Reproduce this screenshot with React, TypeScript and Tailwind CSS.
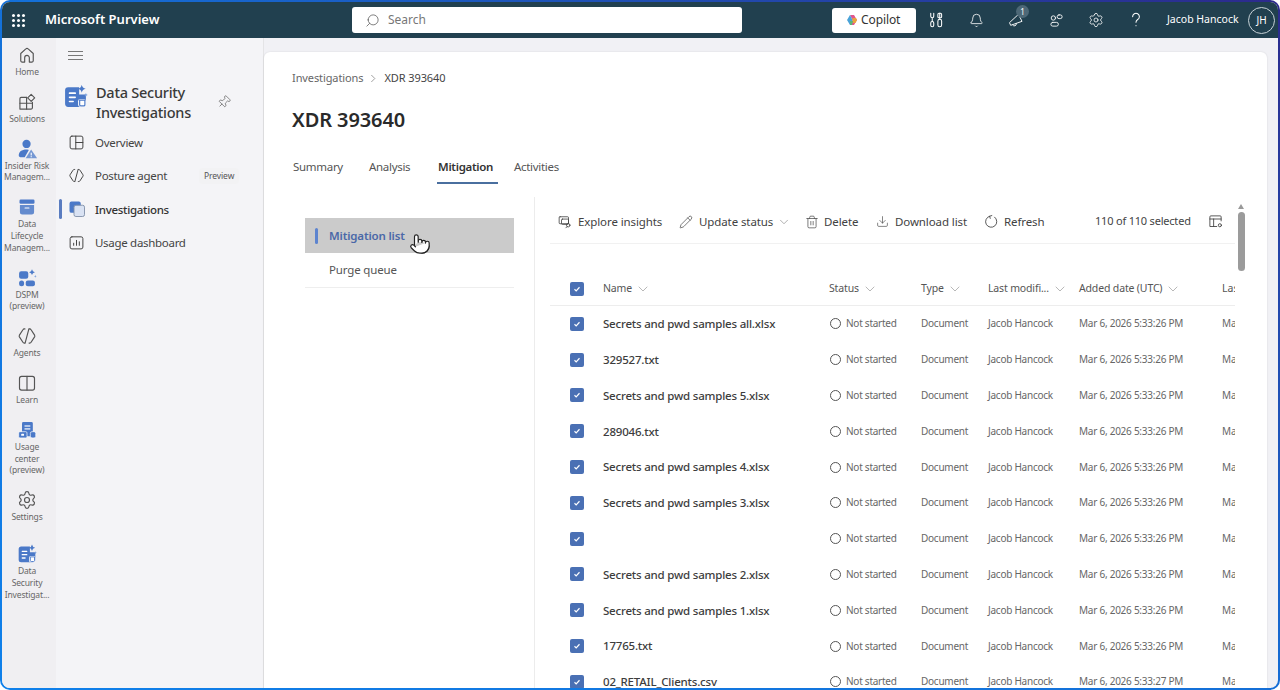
import { Bell, ChevronDown, Download, Pencil, Pin, Pointer, Search, Settings, Trash2 } from "lucide-react";
import type { ReactNode } from "react";

const FONT = "font-['Noto_Sans','Open_Sans',sans-serif]";
const BLUE = "#4b79c8";

function Ic({ children, className = "w-5 h-5" }: { children: ReactNode; className?: string }) {
  return (
    <svg viewBox="0 0 24 24" fill="none" stroke="currentColor" strokeWidth="1.4" strokeLinecap="round" strokeLinejoin="round" className={className}>
      {children}
    </svg>
  );
}

function Sparkle({ x, y, s, fill }: { x: number; y: number; s: number; fill: string }) {
  return <path d={`M${x} ${y - s}Q${x + s * 0.15} ${y - s * 0.15} ${x + s} ${y}Q${x + s * 0.15} ${y + s * 0.15} ${x} ${y + s}Q${x - s * 0.15} ${y + s * 0.15} ${x - s} ${y}Q${x - s * 0.15} ${y - s * 0.15} ${x} ${y - s}Z`} fill={fill} stroke="none" />;
}

function HomeIcon() {
  return <Ic><path d="M4.5 10.2 10.6 4.6a2 2 0 0 1 2.8 0l6.1 5.6V19a1.5 1.5 0 0 1-1.5 1.5h-3.2v-5.2a2.8 2.8 0 0 0-5.600 0v5.200H6A1.5 1.5 0 0 1 4.500 19z" /></Ic>;
}

function SolutionsIcon() {
  return (
    <Ic>
      <path d="M11.500 6.500H5A1.500 1.500 0 0 0 3.500 8v12.500H17a1.500 1.500 0 0 0 1.500-1.500v-6.500" />
      <path d="M3.500 13.500h15M11.500 6.500v14" />
      <path d="m17 2.800 4.200 4.200-4.200 4.200L12.800 7z" />
    </Ic>
  );
}

function InsiderIcon() {
  return (
    <svg viewBox="0 0 24 24" className="w-[22px] h-[22px]">
      <circle cx="11.500" cy="6.500" r="4.500" fill={BLUE} />
      <path d="M3 19c0-4 3-6.500 8.500-6.500 1.500 0 2 .3 2.500.6L9.500 21H6c-2 0-3-.8-3-2z" fill={BLUE} />
      <path d="M16.500 12.500 23 22H10.500z" fill={BLUE} opacity="0.75" />
      <rect x="16" y="16" width="1.200" height="3" fill="#fff" />
      <rect x="16" y="19.800" width="1.200" height="1.200" fill="#fff" />
    </svg>
  );
}

function ArchiveIcon() {
  return (
    <svg viewBox="0 0 24 24" className="w-5 h-5">
      <rect x="3" y="3" width="18" height="5" rx="1.500" fill={BLUE} />
      <path d="M3.500 9.500h17V18a3 3 0 0 1-3 3h-11a3 3 0 0 1-3-3z" fill={BLUE} opacity="0.85" />
      <rect x="9" y="12.500" width="6" height="1.400" rx="0.7" fill="#fff" />
    </svg>
  );
}

function DspmIcon() {
  return (
    <svg viewBox="0 0 24 24" className="w-5 h-5">
      <rect x="2.500" y="4" width="11" height="9" rx="2.500" fill={BLUE} />
      <rect x="2.500" y="15" width="6" height="7" rx="3" fill={BLUE} />
      <rect x="10.500" y="15" width="11" height="7" rx="2.500" fill={BLUE} />
      <Sparkle x={18} y={5} s={3.500} fill={BLUE} />
      <Sparkle x={22} y={10} s={1.600} fill="#7fa3dd" />
    </svg>
  );
}

function AgentIcon({ className = "w-5 h-5" }: { className?: string }) {
  return (
    <Ic className={className}>
      <path d="M9.500 3.500H8.800a2 2 0 0 0-1.700 1L2.900 11a2 2 0 0 0 0 2l4.200 6.500a2 2 0 0 0 1.700 1h.7" />
      <path d="M14.500 3.500h.7a2 2 0 0 1 1.700 1l4.200 6.500a2 2 0 0 1 0 2l-4.200 6.500a2 2 0 0 1-1.700 1h-.7" />
      <path d="m14.200 3.800-4.400 16.400" />
    </Ic>
  );
}

function BookIcon() {
  return <Ic><rect x="3" y="4" width="18" height="16.500" rx="2.500" /><path d="M12 4v16.500" /></Ic>;
}

function UsageIcon() {
  return (
    <svg viewBox="0 0 24 24" className="w-5 h-5">
      <rect x="6" y="2.500" width="13" height="17" rx="1.600" fill={BLUE} />
      <rect x="9" y="6.500" width="7" height="1.400" fill="#fff" />
      <rect x="9" y="10" width="7" height="1.400" fill="#fff" />
      <rect x="2" y="14" width="10" height="7.500" rx="1.500" fill={BLUE} stroke="#fff" strokeWidth="0.8" />
      <rect x="5" y="16.500" width="3.500" height="2.500" rx="0.8" fill="#fff" />
      <rect x="16" y="14" width="6.500" height="7.500" rx="2" fill={BLUE} stroke="#fff" strokeWidth="0.8" />
    </svg>
  );
}

function DsiIcon({ className = "w-5 h-5" }: { className?: string }) {
  return (
    <svg viewBox="0 0 24 24" className={className}>
      <path d="M5 3h10.500v7H22V19a3 3 0 0 1-3 3H5a3 3 0 0 1-3-3V6a3 3 0 0 1 3-3z" fill={BLUE} />
      <rect x="5.500" y="8" width="7" height="1.600" rx="0.8" fill="#fff" />
      <rect x="5.500" y="12" width="7" height="1.600" rx="0.8" fill="#fff" />
      <rect x="5.500" y="16" width="5" height="1.600" rx="0.8" fill="#fff" />
      <rect x="14.500" y="14.500" width="7.500" height="7.500" rx="2" fill="#fff" />
      <path d="M16 15.500h5V20a1 1 0 0 1-1 1h-3a1 1 0 0 1-1-1z" fill="#fff" stroke={BLUE} strokeWidth="1.100" />
      <Sparkle x={18} y={4.500} s={3.800} fill={BLUE} />
      <Sparkle x={22} y={10.500} s={1.800} fill="#7fa3dd" />
    </svg>
  );
}

const railItems = [
  { icon: <HomeIcon />, label: ["Home"] },
  { icon: <SolutionsIcon />, label: ["Solutions"] },
  { icon: <InsiderIcon />, label: ["Insider Risk", "Managem..."] },
  { icon: <ArchiveIcon />, label: ["Data", "Lifecycle", "Managem..."] },
  { icon: <DspmIcon />, label: ["DSPM", "(preview)"] },
  { icon: <AgentIcon />, label: ["Agents"] },
  { icon: <BookIcon />, label: ["Learn"] },
  { icon: <UsageIcon />, label: ["Usage", "center", "(preview)"] },
  { icon: <Settings className="w-5 h-5" strokeWidth={1.4} />, label: ["Settings"] },
  { icon: <DsiIcon />, label: ["Data", "Security", "Investigat..."] },
];

const navIcons = {
  overview: <Ic className="w-[17px] h-[17px]"><rect x="3" y="3" width="18" height="18" rx="2.500" /><path d="M11 3v18M11 12h10" /></Ic>,
  usage: <Ic className="w-[17px] h-[17px]"><rect x="3" y="4" width="18" height="17" rx="2.500" /><path d="M8 16v-3M12 16V9M16 16v-5" /></Ic>,
  investigations: (
    <svg viewBox="0 0 24 24" className="w-[18px] h-[18px]">
      <rect x="2" y="2" width="15" height="15" rx="2.500" fill={BLUE} />
      <rect x="8" y="7" width="14" height="15" rx="2.500" fill="#d9e2f3" stroke="#7f8fa8" strokeWidth="1.200" />
    </svg>
  ),
};

const rows: [string, string][] = [
  ["Secrets and pwd samples all.xlsx", "Mar 6, 2026 5:33:26 PM"],
  ["329527.txt", "Mar 6, 2026 5:33:26 PM"],
  ["Secrets and pwd samples 5.xlsx", "Mar 6, 2026 5:33:26 PM"],
  ["289046.txt", "Mar 6, 2026 5:33:26 PM"],
  ["Secrets and pwd samples 4.xlsx", "Mar 6, 2026 5:33:26 PM"],
  ["Secrets and pwd samples 3.xlsx", "Mar 6, 2026 5:33:26 PM"],
  ["", "Mar 6, 2026 5:33:26 PM"],
  ["Secrets and pwd samples 2.xlsx", "Mar 6, 2026 5:33:26 PM"],
  ["Secrets and pwd samples 1.xlsx", "Mar 6, 2026 5:33:26 PM"],
  ["17765.txt", "Mar 6, 2026 5:33:26 PM"],
  ["02_RETAIL_Clients.csv", "Mar 6, 2026 5:33:27 PM"],
];

const COLS = "grid grid-cols-[33px_226px_92px_67px_91px_143px_13px] pl-[20px] items-center";

function Check() {
  return (
    <span className="flex h-[14px] w-[14px] items-center justify-center rounded-[2px] bg-[#4a70b4]">
      <svg viewBox="0 0 12 12" className="h-[10px] w-[10px]" fill="none" stroke="#fff" strokeWidth="1.400"><path d="m3 6.300 2 2 4-4.400" /></svg>
    </span>
  );
}

function Head({ label, gap = "ml-[3px]" }: { label: string; gap?: string }) {
  return (
    <div className="flex items-center whitespace-nowrap text-[10.500px] tracking-[-0.15px] text-[#555]">
      {label}
      <ChevronDown className={`${gap} h-[16px] w-[16px] text-[#888]`} strokeWidth={0.9} />
    </div>
  );
}

function Tool({ icon, label, className, chevron }: { icon: ReactNode; label: string; className: string; chevron?: boolean }) {
  return (
    <div className={`flex items-center whitespace-nowrap text-[11.500px] tracking-[-0.1px] text-[#424242] ${className}`}>
      {icon}
      {label}
      {chevron && <ChevronDown className="ml-[4px] h-[14px] w-[14px] text-[#777]" strokeWidth={1} />}
    </div>
  );
}

export default function App() {
  return (
    <div className={`${FONT} h-[690px] w-[1280px] overflow-hidden bg-white`}>
      <div className="h-full rounded-[10px] bg-[linear-gradient(30deg,#0f80ea_0%,#1470d8_50%,#2c2a8c_100%)] p-[2px]">
        <div className="flex h-full flex-col overflow-hidden rounded-[8px] bg-[#f1f1f5]">
          <header className="flex h-[36px] shrink-0 items-center bg-[#21404f] text-white">
            <div className="flex w-[350px] items-center pl-[10px]">
              <div className="grid w-[13px] grid-cols-3 gap-[2px]">
                {Array.from({ length: 9 }).map((_, i) => (
                  <span key={i} className="h-[3px] w-[3px] rounded-full bg-white" />
                ))}
              </div>
              <span className="ml-[20px] text-[13px] font-semibold">Microsoft Purview</span>
            </div>
            <div className="flex h-[26px] w-[390px] items-center rounded-[3px] bg-white pl-[13px] text-[#777]">
              <Search className="h-[15px] w-[15px] -scale-x-100 text-[#555]" strokeWidth={1.2} />
              <span className="ml-[8px] text-[12px]">Search</span>
            </div>
            <div className="ml-[90px] flex h-[25px] w-[84px] items-center rounded-[3px] bg-white pl-[14px] text-[12px] tracking-[-0.1px] text-[#333]">
              <svg viewBox="0 0 24 24" className="mr-[3px] h-[12px] w-[12px]">
                <path d="M8 2h8l6 10-6 10H8l5-10z" fill="#e0568e" />
                <path d="M8 2 2 12l6 10 5-10z" fill="#4aa3d8" />
                <path d="M13 8h7l2 4-3 6h-6z" fill="#e8a33c" />
                <path d="M8 14h6l-2 8H8z" fill="#58b57a" />
              </svg>
              Copilot
            </div>
            <div className="flex w-[40px] justify-center">
              <Ic className="h-[18px] w-[18px]">
                <path d="M5 3v4a2 2 0 0 0 4 0V3M7 9v5" />
                <rect x="5" y="14" width="4" height="7" rx="2" />
                <path d="M17 3v8" />
                <rect x="14.500" y="3" width="5" height="6" rx="1.500" />
                <rect x="14.500" y="11" width="5" height="10" rx="2.500" />
              </Ic>
            </div>
            <div className="flex w-[40px] justify-center"><Bell className="h-[15px] w-[15px]" strokeWidth={1.3} /></div>
            <div className="relative flex w-[40px] justify-center">
              <Ic className="h-[16px] w-[16px]">
                <path d="M16 4 21 14 4 20l-1.500-3.500z" />
                <path d="M7 19.500a3 3 0 0 0 5.500-2" />
              </Ic>
              <span className="absolute left-[20px] top-[-7px] flex h-[13px] w-[13px] items-center justify-center rounded-full bg-[#4d6877] text-[8px]">1</span>
            </div>
            <div className="flex w-[40px] justify-center">
              <Ic className="h-[15px] w-[15px]">
                <circle cx="7" cy="8" r="3.500" />
                <rect x="13" y="3" width="8" height="6" rx="3" />
                <rect x="3" y="15" width="12" height="6" rx="3" />
              </Ic>
            </div>
            <div className="flex w-[40px] justify-center"><Settings className="h-[16px] w-[16px]" strokeWidth={1.2} /></div>
            <div className="flex w-[40px] justify-center">
              <Ic className="h-[18px] w-[18px]"><path d="M7.500 7.500a4.500 4.500 0 1 1 6.800 3.900c-1.500 1-2.300 1.800-2.300 3.600" /><path d="M12 19.500v.2" /></Ic>
            </div>
            <span className="ml-[11px] w-[72px] whitespace-nowrap text-[10.500px]">Jacob Hancock</span>
            <span className="ml-[9px] flex h-[27px] w-[27px] shrink-0 items-center justify-center rounded-full border border-[#c6d0d6] text-[10px]">JH</span>
          </header>

          <div className="flex min-h-0 flex-1">
            <aside className="flex w-[54px] shrink-0 flex-col items-center gap-[14px] bg-[#f0eff2] pr-[4px] pt-[7px] text-[#555]">
              {railItems.map((item, i) => (
                <div key={i} className={`flex w-full flex-col items-center ${i === 9 ? "mt-[7px]" : ""}`}>
                  <div className="flex h-[20px] items-center justify-center">{item.icon}</div>
                  <div className="mt-[1px] text-center text-[8.500px] leading-[11.800px] tracking-[-0.15px] text-[#666]">
                    {item.label.map((l) => (
                      <div key={l} className="whitespace-nowrap">{l}</div>
                    ))}
                  </div>
                </div>
              ))}
            </aside>

            <nav className="w-[208px] shrink-0 border-r border-[#e4e4e6] bg-[#f4f4f7] text-[#444]">
              <div className="ml-[12px] mt-[13px] flex w-[15px] flex-col gap-[3px]">
                <span className="h-px bg-[#777]" />
                <span className="h-px bg-[#777]" />
                <span className="h-px bg-[#777]" />
              </div>
              <div className="mt-[22px] flex items-start pl-[7px]">
                <DsiIcon className="mt-[2px] h-[25px] w-[25px]" />
                <div className="ml-[8px] w-[110px] text-[14.500px] font-medium leading-[20px] tracking-[-0.25px] text-[#3a3a3a]">Data Security Investigations</div>
                <Pin className="ml-[11px] mt-[13px] h-[14px] w-[14px] rotate-45 text-[#555]" strokeWidth={1.1} />
              </div>
              <div className="mt-[4px] flex flex-col text-[11.500px] tracking-[-0.3px]">
                <div className="flex h-[33.300px] items-center pl-[12px]">
                  {navIcons.overview}
                  <span className="ml-[10px]">Overview</span>
                </div>
                <div className="flex h-[33.300px] items-center pl-[12px]">
                  <AgentIcon className="h-[17px] w-[17px]" />
                  <span className="ml-[10px] w-[104px]">Posture agent</span>
                  <span className="rounded-[4px] bg-[#f2f2f4] px-[5px] py-[2px] text-[8.500px] tracking-[-0.1px] text-[#555]">Preview</span>
                </div>
                <div className="flex h-[33.300px] items-center">
                  <span className="ml-[3px] h-[20px] w-[3px] rounded-full bg-[#5a7cc0]" />
                  <span className="ml-[6px]">{navIcons.investigations}</span>
                  <span className="ml-[9px] font-medium text-[#333]">Investigations</span>
                </div>
                <div className="flex h-[33.300px] items-center pl-[12px]">
                  {navIcons.usage}
                  <span className="ml-[10px]">Usage dashboard</span>
                </div>
              </div>
            </nav>

            <main className="flex min-w-0 flex-1 pt-[14px]">
              <section className="flex w-[1003px] shrink-0 flex-col overflow-hidden rounded-t-[6px] bg-white pl-[28px] pt-[18px] shadow-[0_0_2px_rgba(0,0,0,0.12)]">
                <div className="flex h-[16px] items-center text-[11px] tracking-[-0.1px] text-[#666]">
                  Investigations
                  <svg viewBox="0 0 8 10" className="mx-[7px] h-[9px] w-[7px]" fill="none" stroke="#777" strokeWidth="0.8"><path d="m1.500 1 4 4-4 4" /></svg>
                  <span className="text-[#444]">XDR 393640</span>
                </div>
                <h1 className="mt-[20px] h-[28px] text-[20px] font-semibold leading-[28px] tracking-[-0.1px] text-[#2a2a2a]">XDR 393640</h1>
                <div className="mt-[22px] flex h-[28px] items-start text-[11.500px] leading-[22px] tracking-[-0.3px] text-[#555]">
                  <span className="ml-px w-[76px]">Summary</span>
                  <span className="w-[68px]">Analysis</span>
                  <span className="mr-[16px] flex h-[28px] w-[61px] flex-col justify-between border-b-[2px] border-[#4a6f9f] pl-[1px] font-semibold text-[#333]">Mitigation</span>
                  <span>Activities</span>
                </div>

                <div className="mt-[13px] flex min-h-0 flex-1">
                  <div className="relative ml-[13px] w-[209px] shrink-0 pt-[21px] text-[11.500px] tracking-[-0.15px]">
                    <div className="flex h-[35px] items-center bg-[#cbcbcb] pl-[10px]">
                      <span className="h-[16px] w-[3px] rounded-full bg-[#5d84cf]" />
                      <span className="ml-[11px] font-semibold text-[#4a68a8]">Mitigation list</span>
                    </div>
                    <div className="flex h-[35px] items-center border-b border-[#eeeeee] pl-[24px] text-[#555]">Purge queue</div>
                    <Pointer className="absolute left-[104px] top-[36px] h-[22px] w-[22px] fill-white text-[#222]" strokeWidth={1.3} />
                  </div>
                  <div className="ml-[20px] flex w-[701px] shrink-0 flex-col overflow-hidden border-l border-[#ececec] pl-[15px]">
                    <div className="flex h-[47px] shrink-0 items-center border-b border-[#f1f1f1] pb-[1px] pt-[4px]">
                      <Tool
                        className="ml-[8px] w-[121px]"
                        label="Explore insights"
                        icon={
                          <Ic className="mr-[6px] h-[14px] w-[14px] text-[#444]">
                            <rect x="2" y="3" width="16" height="12" rx="1.500" />
                            <rect x="6" y="7" width="12" height="9" rx="1.500" />
                            <circle cx="17.500" cy="17.500" r="3" />
                            <path d="m15.500 20-2 2" />
                          </Ic>
                        }
                      />
                      <Tool className="w-[126px]" label="Update status" chevron icon={<Pencil className="mr-[6px] h-[14px] w-[14px] text-[#444]" strokeWidth={1.2} />} />
                      <Tool className="w-[71px]" label="Delete" icon={<Trash2 className="mr-[5px] h-[14px] w-[14px] text-[#444]" strokeWidth={1.2} />} />
                      <Tool className="w-[108px]" label="Download list" icon={<Download className="mr-[6px] h-[13px] w-[13px] text-[#444]" strokeWidth={1.2} />} />
                      <Tool
                        className="w-[111px]"
                        label="Refresh"
                        icon={
                          <Ic className="mr-[5px] h-[15px] w-[15px] text-[#444]">
                            <path d="M9 3.500A9 9 0 1 0 17 5" />
                            <path d="M12.500 2.500 9 3.500l1 3.500" />
                          </Ic>
                        }
                      />
                      <span className="w-[113px] whitespace-nowrap text-[11px] tracking-[-0.2px] text-[#444]">110 of 110 selected</span>
                      <Ic className="h-[15px] w-[15px] text-[#444]">
                        <path d="M21 11V4.500A1.500 1.500 0 0 0 19.500 3h-15A1.500 1.500 0 0 0 3 4.500V20h11" />
                        <path d="M3 8h18M9 8v12" />
                        <circle cx="19" cy="18" r="2.500" />
                      </Ic>
                    </div>
                    <div className={`${COLS} h-[62px] shrink-0 border-b border-[#ededed] pt-[29px]`}>
                      <Check />
                      <Head label="Name" />
                      <Head label="Status" />
                      <Head label="Type" />
                      <Head label="Last modifi..." />
                      <Head label="Added date (UTC)" />
                      <span className="overflow-hidden whitespace-nowrap text-[10.500px] text-[#555]">Last</span>
                    </div>
                    {rows.map(([name, date], i) => (
                      <div key={i} className={`${COLS} h-[35.800px] shrink-0`}>
                        <Check />
                        <span className="whitespace-nowrap text-[11.500px] font-medium tracking-[-0.2px] text-[#3d3d3d]">{name}</span>
                        <span className="flex items-center whitespace-nowrap text-[10px] tracking-[-0.25px] text-[#666]">
                          <span className="ml-[1px] mr-[5px] h-[11px] w-[11px] rounded-full border border-[#555]" />
                          Not started
                        </span>
                        <span className="text-[10px] tracking-[-0.25px] text-[#666]">Document</span>
                        <span className="whitespace-nowrap text-[10px] tracking-[-0.25px] text-[#666]">Jacob Hancock</span>
                        <span className="whitespace-nowrap text-[10px] tracking-[-0.25px] text-[#666]">{date}</span>
                        <span className="overflow-hidden whitespace-nowrap text-[10px] text-[#666]">Mar</span>
                      </div>
                    ))}
                  </div>
                  <div className="ml-[2px] flex w-[8px] shrink-0 flex-col items-center pt-[7px]">
                    <span className="h-0 w-0 border-x-[3px] border-b-[5px] border-x-transparent border-b-[#999]" />
                    <span className="mt-[3px] h-[59px] w-[7px] rounded-full bg-[#9b9b9b]" />
                  </div>
                </div>
              </section>
            </main>
          </div>
        </div>
      </div>
    </div>
  );
}
